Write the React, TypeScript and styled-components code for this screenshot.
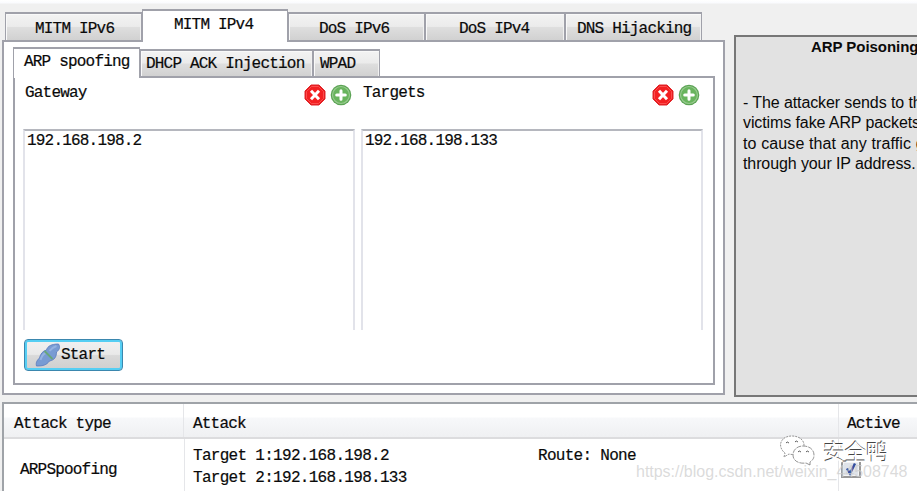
import React from 'react';
import styled, { createGlobalStyle } from 'styled-components';

const LINE = '#a0a1aa';

const GlobalStyle = createGlobalStyle`
  * { box-sizing: border-box; }
  body { margin: 0; overflow: hidden; background: #f0f0f0; }
`;

const Window = styled.div`
  position: relative;
  width: 917px;
  height: 491px;
  overflow: hidden;
  background: linear-gradient(#fff 0, #fafbfe 3px, #f0f0f0 4px);
  color: #0a0a0a;
  font: 16px/22px 'Liberation Mono', monospace;
  letter-spacing: -0.8px;
  white-space: pre;
  -webkit-text-stroke: 0.2px;
`;

const Upper = styled.div`
  display: flex;
  height: 402px;
  padding-left: 2px;
`;

const TabControl = styled.section`
  width: 723px;
  padding-top: 9px;
`;

const TabStrip = styled.div<{ $height: number; $indent?: number }>`
  display: flex;
  align-items: flex-end;
  height: ${(p) => p.$height}px;
  padding-left: ${(p) => p.$indent ?? 0}px;
`;

const Tab = styled.div<{ $width: number; $height: number; $active?: boolean; $pad: number; $top: number }>`
  position: relative;
  z-index: ${(p) => (p.$active ? 2 : 0)};
  flex: none;
  width: ${(p) => p.$width}px;
  height: ${(p) => p.$height}px;
  margin-bottom: ${(p) => (p.$active ? -2 : 0)}px;
  padding: ${(p) => p.$top}px 0 0 ${(p) => p.$pad}px;
  border: 1px solid ${LINE};
  border-width: 2px 1px 0;
  background: ${(p) => (p.$active ? '#fff' : 'linear-gradient(#f3f3f3 0%, #ebebeb 48%, #dedede 52%, #d1d1d1 100%)')};
  box-shadow: ${(p) => (p.$active ? 'none' : 'inset 1px 1px #f9f9f9, inset -1px 0 #f1f1f1')};
  line-height: 18px;
`;

const OuterPage = styled.div`
  height: 355px;
  padding: 5px 8px 8px 9px;
  border: 2px solid ${LINE};
  background: #fff;
`;

const InnerPage = styled.div`
  height: 309px;
  padding: 6px 10px 0 8px;
  border: 2px solid ${LINE};
`;

const Lists = styled.div`
  display: grid;
  grid-template-columns: 332px 342px;
  column-gap: 6px;
`;

const ListHeader = styled.div`
  display: flex;
  height: 45px;
  padding: 0 3px 0 2px;
  line-height: 18px;
`;

const IconGroup = styled.div`
  display: flex;
  gap: 4px;
  margin-left: auto;
  svg { display: block; }
`;

const ListBox = styled.div`
  height: 201px;
  padding: 0 2px;
  border: 2px solid #e2e3ea;
  border-width: 2px 2px 0;
  border-top-color: #b5b7be;
  line-height: 20px;
`;

const StartButton = styled.button`
  display: flex;
  align-items: center;
  width: 99px;
  height: 32px;
  margin: 9px 0 0 1px;
  padding: 0 0 0 10px;
  border: 1px solid #3b87ae;
  border-radius: 4px;
  background: linear-gradient(#f1f1f1, #e9e9e9 48%, #d9d9d9 52%, #cfcfcf);
  box-shadow: inset 0 0 0 2px #55cef3;
  color: inherit;
  font: inherit;
  letter-spacing: inherit;
`;

const InfoPanel = styled.aside`
  flex: none;
  width: 240px;
  height: 362px;
  margin: 35px 0 0 9px;
  padding: 0 7px;
  border: 2px solid #777;
  background: #e2e2e2;
  font: 16px/20.4px 'Liberation Sans', Arial, sans-serif;
  letter-spacing: -0.1px;
  -webkit-text-stroke: 0;
`;

const InfoTitle = styled.h1`
  margin: 0 0 37px 68px;
  font-size: 15px;
  line-height: 19px;
  letter-spacing: -0.05px;
`;

const InfoLine = styled.p<{ $spacing?: number }>`
  margin: 0;
  letter-spacing: ${(p) => p.$spacing ?? -0.1}px;
`;

const Table = styled.section`
  height: 89px;
  margin-left: 2px;
  border: 2px solid #9fa3a8;
  border-width: 2px 0 0 2px;
  background: #fff;
`;

const Row = styled.div<{ $head?: boolean }>`
  display: grid;
  grid-template-columns: ${(p) => (p.$head ? '180px 655px 78px' : '180px 654px 78px')};
  height: ${(p) => (p.$head ? 35 : 52)}px;
  margin-left: ${(p) => (p.$head ? 0 : 1)}px;
  border-bottom: ${(p) => (p.$head ? '2px solid #dcdcde' : '0')};
  background: ${(p) => (p.$head ? 'linear-gradient(#fff 0 13px, #f7f8fa 14px, #eff0f2)' : '#fff')};
`;

const Cell = styled.div<{ $left: number; $top: number }>`
  padding: ${(p) => p.$top}px 0 0 ${(p) => p.$left}px;
  border-right: 1px solid #e5e6e9;
  &:last-child { border-right: 0; }
`;

const AttackCell = styled(Cell)`
  display: grid;
  grid-template-columns: 345px 1fr;
  align-content: start;
  letter-spacing: -0.7px;
`;

const CheckBox = styled.div`
  width: 20px;
  height: 18px;
  border: 2px solid #999;
  background: #dfe3e9;
  box-shadow: inset 0 0 0 1px #f4f4f4;
  svg { display: block; }
`;

const Brand = styled.div`
  position: absolute;
  left: 779px;
  top: 433px;
  display: flex;
  align-items: center;
  gap: 7px;
  height: 34px;
  color: #fff;
  font: 22px/34px 'Noto Sans CJK SC', sans-serif;
  letter-spacing: -0.4px;
  text-shadow: -0.6px -0.7px 0 #444;
  -webkit-text-stroke: 0;
`;

const Address = styled.div`
  position: absolute;
  left: 636px;
  top: 462px;
  color: rgba(205, 205, 205, 0.72);
  font: 16px/20px 'Liberation Sans', Arial, sans-serif;
  letter-spacing: -0.02px;
  -webkit-text-stroke: 0;
`;

const RemoveIcon = () => (
  <svg width="22" height="22" viewBox="0 0 22 22">
    <path d="M7 1h8l6 6v8l-6 6H7l-6-6V7z" fill="#e8191c" stroke="#e0282c" />
    <path d="M7.5 2.5h7l5 5v7l-5 5h-7l-5-5v-7z" fill="#f32022" stroke="#ff5a59" strokeWidth=".8" />
    <path d="M7 6.8l8 8.4M15 6.8l-8 8.4" stroke="#fff" strokeWidth="3" />
  </svg>
);

const AddIcon = () => (
  <svg width="22" height="22" viewBox="0 0 22 22">
    <circle cx="11" cy="11" r="10.3" fill="#5ba354" />
    <circle cx="11" cy="11" r="8.5" fill="#69b45e" stroke="#98cb8f" strokeWidth="1.2" />
    <path d="M11 6.7v8.6M6.7 11h8.6" stroke="#fff" strokeWidth="3" strokeLinecap="round" />
  </svg>
);

const PlugIcon = () => (
  <svg width="26" height="24" viewBox="0 0 25 24">
    <path d="M1 23c-1-4 1-6 3-8 1-4 3-7 7-8 1-4 5-6 12-6 2 3 1 6-2 8 0 5-2 8-7 9-3 4-6 5-13 5z" fill="#789bd3" stroke="#5879bd" strokeWidth=".8" />
    <path d="M5 17c1-4 3-6 5-7M14 8c2-3 4-4 7-5" fill="none" stroke="#94b2e2" strokeWidth="2" />
    <path d="M9 8l8 8" stroke="#68a878" strokeWidth="1.8" />
  </svg>
);

const CheckIcon = () => (
  <svg width="16" height="14" viewBox="0 0 16 14">
    <path d="M4 6.5l3 5L12 1.5" fill="none" stroke="#344f9f" strokeWidth="2.4" />
  </svg>
);

const ChatIcon = () => (
  <svg width="37" height="32" viewBox="0 0 37 32" fill="#fff" stroke="#777" strokeWidth=".8">
    <path d="M5 23l1-4C-2 13 1 2 13 2c7 0 12 4 12 9 0 7-7 11-15 9z" strokeDasharray="2 1" />
    <path d="M31 31l-4-2c-7 1-13-2-13-8 0-5 4-9 10-9 7 0 11 4 11 9 0 3-1 5-4 7z" strokeDasharray="5 1" />
    <path d="M7 9q1-2 3 0M16 8q1-2 3 0M19 18q1-2 3 0M27 18q1-2 3 0" fill="none" stroke="#333" />
  </svg>
);

const outerTabs = [
  { label: 'MITM IPv6', width: 137, pad: 29 },
  { label: 'MITM IPv4', width: 146, pad: 31, active: true },
  { label: 'DoS IPv6', width: 137, pad: 30 },
  { label: 'DoS IPv4', width: 140, pad: 33 },
  { label: 'DNS Hijacking', width: 137, pad: 11 },
];

const innerTabs = [
  { label: 'ARP spoofing', width: 127, pad: 10, active: true },
  { label: 'DHCP ACK Injection', width: 173, pad: 5 },
  { label: 'WPAD', width: 67, pad: 6 },
];

const lists = [
  { title: 'Gateway', address: '192.168.198.2' },
  { title: 'Targets', address: '192.168.198.133' },
];

export default function App() {
  return (
    <Window>
      <GlobalStyle />
      <Upper>
        <TabControl>
          <TabStrip $height={31} $indent={3}>
            {outerTabs.map((t) => (
              <Tab key={t.label} $width={t.width} $height={t.active ? 33 : 28} $active={t.active} $pad={t.pad} $top={t.active ? 5 : 6}>
                {t.label}
              </Tab>
            ))}
          </TabStrip>
          <OuterPage>
            <TabStrip $height={29}>
              {innerTabs.map((t) => (
                <Tab key={t.label} $width={t.width} $height={t.active ? 31 : 27} $active={t.active} $pad={t.pad} $top={t.active ? 4 : 4}>
                  {t.label}
                </Tab>
              ))}
            </TabStrip>
            <InnerPage>
              <Lists>
                {lists.map((l) => (
                  <div key={l.title}>
                    <ListHeader>
                      {l.title}
                      <IconGroup>
                        <RemoveIcon />
                        <AddIcon />
                      </IconGroup>
                    </ListHeader>
                    <ListBox>{l.address}</ListBox>
                  </div>
                ))}
              </Lists>
              <StartButton>
                <PlugIcon />
                Start
              </StartButton>
            </InnerPage>
          </OuterPage>
        </TabControl>
        <InfoPanel>
          <InfoTitle>ARP Poisoning</InfoTitle>
          <InfoLine>- The attacker sends to the</InfoLine>
          <InfoLine>victims fake ARP packets</InfoLine>
          <InfoLine $spacing={0.12}>to cause that any traffic go</InfoLine>
          <InfoLine>through your IP address.</InfoLine>
        </InfoPanel>
      </Upper>
      <Table>
        <Row $head>
          <Cell $left={10} $top={9}>Attack type</Cell>
          <Cell $left={9} $top={9}>Attack</Cell>
          <Cell $left={8} $top={9}>Active</Cell>
        </Row>
        <Row>
          <Cell $left={15} $top={20}>ARPSpoofing</Cell>
          <AttackCell $left={8} $top={6}>
            <span>Target 1:192.168.198.2</span>
            <span>Route: None</span>
            <span>Target 2:192.168.198.133</span>
          </AttackCell>
          <Cell $left={2} $top={21}>
            <CheckBox><CheckIcon /></CheckBox>
          </Cell>
        </Row>
      </Table>
      <Address>https://blog.csdn.net/weixin_44508748</Address>
      <Brand>
        <ChatIcon />
        安全鸭
      </Brand>
    </Window>
  );
}
